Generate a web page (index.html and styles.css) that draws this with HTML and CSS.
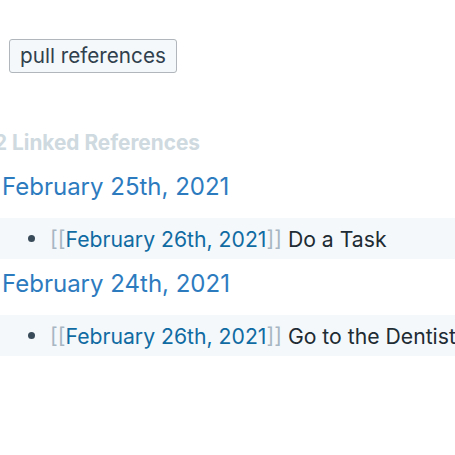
FILE: index.html
```html
<!DOCTYPE html>
<html>
<head>
<meta charset="utf-8">
<link rel="stylesheet" href="styles.css">
</head>
<body>
<div class="page">
  <div class="toolbar"><button class="pull-btn">pull references</button></div>
  <div class="refs">
    <div class="refs-title">2 Linked References</div>
    <div class="ref-group">
      <div class="ref-page">February 25th, 2021</div>
      <div class="block">
        <span class="bullet"></span>
        <span class="block-text"><span class="bracket">[[</span><span class="link">February 26th, 2021</span><span class="bracket">]]</span> Do a Task</span>
      </div>
    </div>
    <div class="ref-group">
      <div class="ref-page">February 24th, 2021</div>
      <div class="block">
        <span class="bullet"></span>
        <span class="block-text"><span class="bracket">[[</span><span class="link">February 26th, 2021</span><span class="bracket">]]</span> Go to the Dentist</span>
      </div>
    </div>
  </div>
</div>
</body>
</html>
```
FILE: styles.css
```css
html, body {
  margin: 0;
  padding: 0;
  background: #fff;
  overflow: hidden;
}
body {
  font-family: Inter, "Noto Sans", sans-serif;
  color: #202b33;
}
.page {
  width: 455px;
  white-space: nowrap;
}
.toolbar {
  padding: 39px 0 0 9px;
}
.pull-btn {
  font-family: Inter, sans-serif;
  font-size: 20.7px;
  color: #30404d;
  height: 34px;
  padding: 0 10px;
  background: #f5f8fa;
  border: 1px solid #b0b6bc;
  border-radius: 3px;
  line-height: 32px;
}
.refs {
  margin-top: 58px;
  margin-left: -6px;
}
.refs-title {
  font-size: 20.8px;
  font-weight: 700;
  color: #ced9e0;
  line-height: 24px;
}
.ref-page {
  font-size: 24px;
  color: #2d7bbf;
  margin-left: 8px;
  line-height: 30px;
  margin-top: 17px;
}
.ref-group + .ref-group .ref-page {
  margin-top: 10px;
}
.block {
  margin-top: 16px;
  background: #f5f8fa;
  height: 41px;
  display: flex;
  align-items: center;
  font-size: 21.2px;
  padding-left: 34px;
}
.bullet {
  flex: none;
  width: 7px;
  height: 7px;
  border-radius: 50%;
  background: #394b59;
  margin-right: 15px;
}
.bracket {
  color: #a7b6c2;
}
.link {
  color: #106ba3;
}
```
